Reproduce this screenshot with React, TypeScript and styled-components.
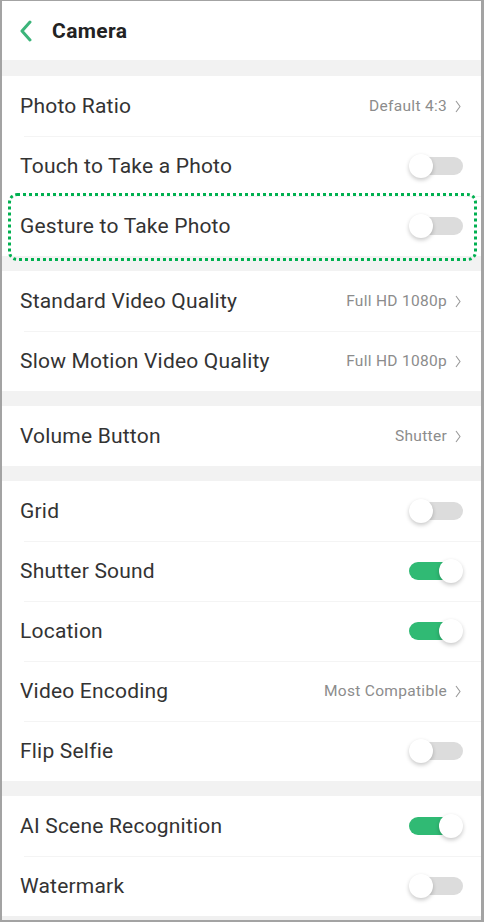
import React from 'react';
import styled, { createGlobalStyle } from 'styled-components';

const GlobalStyle = createGlobalStyle`
  html, body {
    margin: 0;
    padding: 0;
    background: #fff;
  }
  body {
    font-family: Roboto, 'Noto Sans', sans-serif;
  }
`;

const Frame = styled.div`
  box-sizing: border-box;
  width: 484px;
  height: 922px;
  border: 2px solid #a3a3a3;
  border-top-width: 1px;
  border-right-width: 3px;
  background: #f2f2f2;
  display: flex;
  flex-direction: column;
  overflow: hidden;
`;

const Header = styled.div`
  height: 59px;
  background: #fff;
  display: flex;
  align-items: center;
  padding-left: 17px;
  gap: 19px;
`;

const Title = styled.span`
  font-size: 21px;
  font-weight: 700;
  color: #222;
  letter-spacing: 0.4px;
`;

const Group = styled.div<{ gap: number }>`
  margin-top: ${(p) => p.gap}px;
  background: #fff;
  display: flex;
  flex-direction: column;
`;

const Row = styled.div`
  position: relative;
  height: 60px;
  display: flex;
  align-items: center;
  justify-content: space-between;
  padding: 0 18px 0 18px;

  & + &::before {
    content: '';
    position: absolute;
    top: 0;
    left: 22px;
    right: 0;
    height: 1px;
    background: #f4f4f4;
  }
`;

const Label = styled.span`
  font-size: 21px;
  color: #333;
  letter-spacing: 0.2px;
`;

const Value = styled.span`
  display: flex;
  align-items: center;
  gap: 8px;
  font-size: 15.5px;
  letter-spacing: 0.3px;
  color: #8c8c8c;
  padding-right: 2px;
`;

const Switch = styled.span<{ on: boolean }>`
  position: relative;
  width: 54px;
  height: 26px;
  display: block;
`;

const Track = styled.span<{ on: boolean }>`
  position: absolute;
  top: 4px;
  height: 18px;
  border-radius: 9px;
  left: ${(p) => (p.on ? '0' : '3px')};
  right: ${(p) => (p.on ? '8px' : '0')};
  background: ${(p) => (p.on ? '#30ba74' : '#dcdcdc')};
`;

const Knob = styled.span<{ on: boolean }>`
  position: absolute;
  top: 1px;
  width: 24px;
  height: 24px;
  border-radius: 50%;
  background: #fff;
  box-shadow: 0 2px 4px rgba(0, 0, 0, 0.22);
  ${(p) => (p.on ? 'right: 0;' : 'left: 0;')}
`;

const Highlight = styled.div`
  position: absolute;
  top: -3px;
  bottom: -5px;
  left: 6px;
  right: 4px;
  border: 3px dotted #00b050;
  border-radius: 9px;
  pointer-events: none;
`;

const BottomStrip = styled.div`
  flex: 1;
  background: #f0f0f0;
`;

type Item = {
  label: string;
  value?: string;
  toggle?: boolean;
  highlight?: boolean;
};

const groups: { gap: number; items: Item[] }[] = [
  {
    gap: 16,
    items: [
      { label: 'Photo Ratio', value: 'Default 4:3' },
      { label: 'Touch to Take a Photo', toggle: false },
      { label: 'Gesture to Take Photo', toggle: false, highlight: true },
    ],
  },
  {
    gap: 15,
    items: [
      { label: 'Standard Video Quality', value: 'Full HD 1080p' },
      { label: 'Slow Motion Video Quality', value: 'Full HD 1080p' },
    ],
  },
  {
    gap: 15,
    items: [{ label: 'Volume Button', value: 'Shutter' }],
  },
  {
    gap: 15,
    items: [
      { label: 'Grid', toggle: false },
      { label: 'Shutter Sound', toggle: true },
      { label: 'Location', toggle: true },
      { label: 'Video Encoding', value: 'Most Compatible' },
      { label: 'Flip Selfie', toggle: false },
    ],
  },
  {
    gap: 15,
    items: [
      { label: 'AI Scene Recognition', toggle: true },
      { label: 'Watermark', toggle: false },
    ],
  },
];

const Chevron = () => (
  <svg width="6" height="13" viewBox="0 0 6 13">
    <path d="M1 1 L5 6.5 L1 12" fill="none" stroke="#9a9a9a" strokeWidth="1.1" />
  </svg>
);

const BackIcon = () => (
  <svg width="14" height="22" viewBox="0 0 14 22">
    <path
      d="M11 2 L3 11 L11 20"
      fill="none"
      stroke="#3cb47a"
      strokeWidth="3"
      strokeLinecap="round"
      strokeLinejoin="round"
    />
  </svg>
);

const App: React.FC = () => (
  <>
    <GlobalStyle />
    <Frame>
      <Header>
        <BackIcon />
        <Title>Camera</Title>
      </Header>
      {groups.map((g, gi) => (
        <Group key={gi} gap={g.gap}>
          {g.items.map((it) => (
            <Row key={it.label}>
              <Label>{it.label}</Label>
              {it.value !== undefined ? (
                <Value>
                  {it.value}
                  <Chevron />
                </Value>
              ) : (
                <Switch on={!!it.toggle}>
                  <Track on={!!it.toggle} />
                  <Knob on={!!it.toggle} />
                </Switch>
              )}
              {it.highlight && <Highlight />}
            </Row>
          ))}
        </Group>
      ))}
      <BottomStrip />
    </Frame>
  </>
);

export default App;
